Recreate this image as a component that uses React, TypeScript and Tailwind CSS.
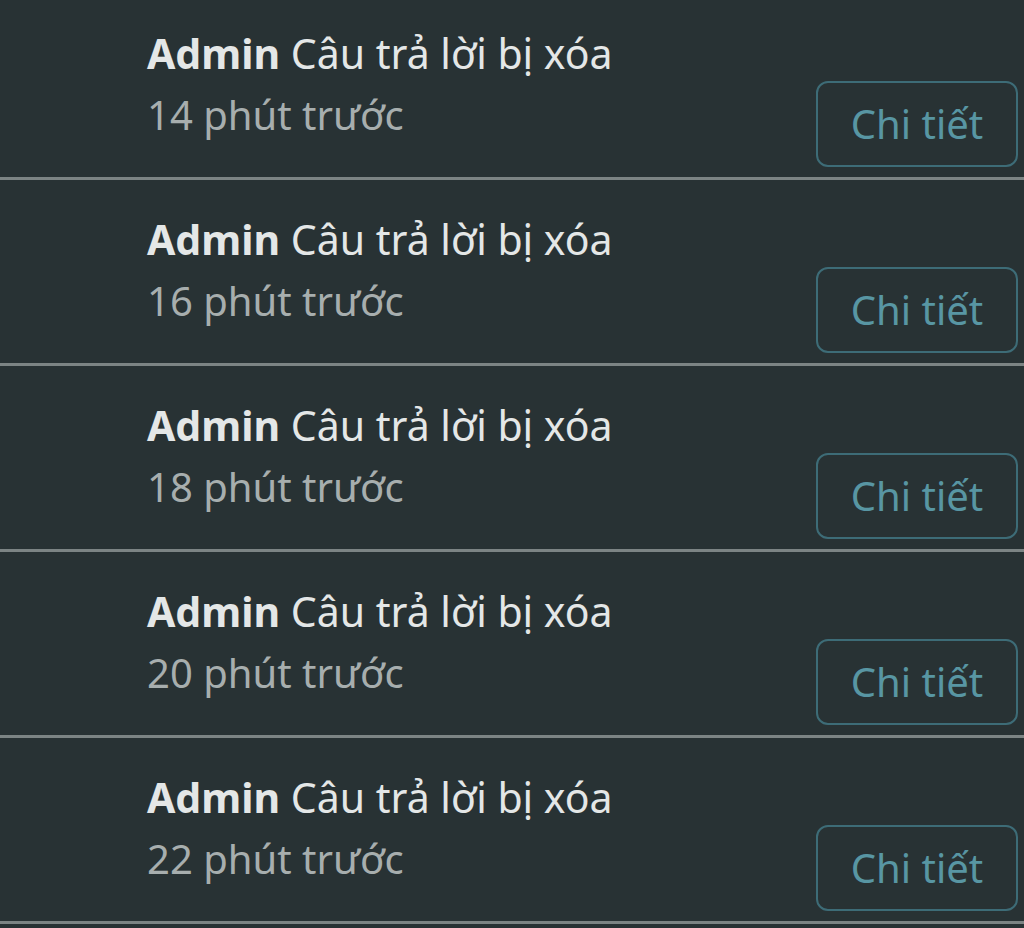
import React from 'react';

const items = [
  { minutes: 14 },
  { minutes: 16 },
  { minutes: 18 },
  { minutes: 20 },
  { minutes: 22 },
];

function NotificationRow({ minutes }: { minutes: number }) {
  return (
    <div className="flex justify-between h-[186px] border-b-[3px] border-[#7c8484] pl-[147px] pr-[6px]">
      <div className="pt-[29px] text-[40px] leading-[61px]">
        <p className="text-[#e4e7e7] text-[41px]">
          <span className="font-bold">Admin</span> Câu trả lời bị xóa
        </p>
        <p className="text-[#a7aeae]">{minutes} phút trước</p>
      </div>
      <button className="self-end mb-[10px] w-[202px] h-[86px] rounded-[12px] border-2 border-[#3d6c77] text-[40px] text-[#5896a3] flex items-center justify-center">
        Chi tiết
      </button>
    </div>
  );
}

export default function App() {
  return (
    <div className="h-[928px] overflow-hidden bg-[#283234]" style={{ fontFamily: '"Noto Sans", "Open Sans", sans-serif' }}>
      <div className="-mt-[6px]">
        {items.map((item) => (
          <NotificationRow key={item.minutes} minutes={item.minutes} />
        ))}
      </div>
    </div>
  );
}
